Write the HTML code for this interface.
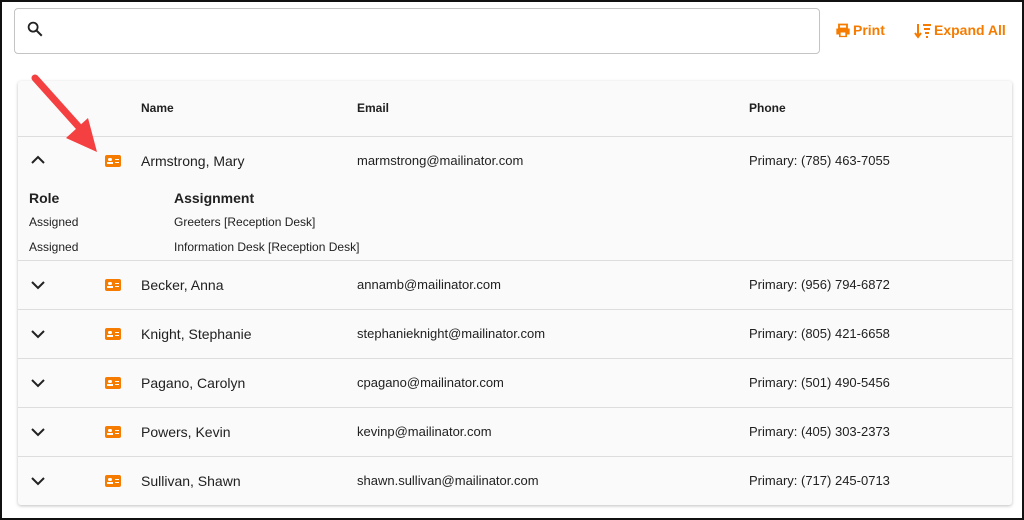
<!DOCTYPE html><html><head><style>
*{box-sizing:border-box;margin:0;padding:0}
body{width:1024px;height:520px;background:#fff;font-family:"Liberation Sans",sans-serif;color:#212121;position:relative;overflow:hidden}
.frame{position:absolute;left:0;top:0;width:1024px;height:520px;border:2px solid #111;z-index:9;pointer-events:none}
.abs{position:absolute}
.search{left:14px;top:8px;width:806px;height:46px;border:1px solid #c4c4c4;border-radius:4px}
.btn{color:#f57c00;font-size:14px;font-weight:bold;top:22px}
.card{left:18px;top:81px;width:994px;height:424px;background:#fafafa;box-shadow:0 1px 3px rgba(0,0,0,.25);border-radius:3px}
.line{left:18px;width:994px;height:1px;background:#ddd}
.t{font-size:14px;color:#212121}
.h{font-size:12px;font-weight:bold}
.s{font-size:12px}
.ic{width:16px;height:12px;background:#f57c00;border-radius:2px}
.ic:before{content:"";position:absolute;left:3px;top:3px;width:4px;height:3px;border-radius:2px;background:#fff}
.ic:after{content:"";position:absolute;left:2px;top:7px;width:6px;height:2px;background:#fff}
.ic i{position:absolute;left:10px;top:4px;width:4px;height:1px;background:#fff;box-shadow:0 3px 0 #fff}
</style></head><body>
<div class="frame"></div>
<div class="abs search"></div>
<svg class="abs" style="left:26px;top:20px" width="18" height="18" viewBox="0 0 24 24"><circle cx="9.5" cy="9.5" r="6" fill="none" stroke="#222" stroke-width="2.4"/><path d="M14 14l7 7" stroke="#222" stroke-width="2.6"/></svg>
<svg class="abs" style="left:835px;top:23px" width="16" height="15" viewBox="0 0 24 22"><path d="M6 2h12v6H6z" fill="none" stroke="#f57c00" stroke-width="2.8"/><path d="M2 8h20v9h-4v4H6v-4H2z" fill="#f57c00"/><rect x="8.5" y="14" width="7" height="5" fill="#fff"/></svg>
<div class="abs btn" style="left:853px">Print</div>
<svg class="abs" style="left:914px;top:23px" width="18" height="16" viewBox="0 0 18 16"><path d="M4 1v12M1 10l3 4 3-4" fill="none" stroke="#f57c00" stroke-width="2"/><path d="M9 2h8M10 6h6M11 10h4M12 14h2" stroke="#f57c00" stroke-width="2"/></svg>
<div class="abs btn" style="left:934px">Expand All</div>
<div class="abs card"></div>
<div class="abs h" style="left:141px;top:101px">Name</div>
<div class="abs h" style="left:357px;top:101px">Email</div>
<div class="abs h" style="left:749px;top:101px">Phone</div>
<div class="abs line" style="top:136px"></div>
<svg class="abs" style="left:30px;top:154px" width="16" height="12" viewBox="0 0 16 12"><path d="M2 9l6-6 6 6" fill="none" stroke="#222" stroke-width="2"/></svg>
<div class="abs ic" style="left:105px;top:155px"><i></i></div>
<div class="abs t" style="left:141px;top:153px">Armstrong, Mary</div>
<div class="abs s" style="left:357px;top:153px;font-size:13px">marmstrong@mailinator.com</div>
<div class="abs s" style="left:749px;top:153px;font-size:13px">Primary: (785) 463-7055</div>
<div class="abs" style="left:29px;top:190px;font-size:14px;font-weight:bold">Role</div>
<div class="abs" style="left:174px;top:190px;font-size:14px;font-weight:bold">Assignment</div>
<div class="abs s" style="left:29px;top:215px">Assigned</div>
<div class="abs s" style="left:174px;top:215px">Greeters [Reception Desk]</div>
<div class="abs s" style="left:29px;top:240px">Assigned</div>
<div class="abs s" style="left:174px;top:240px">Information Desk [Reception Desk]</div>
<svg class="abs" style="left:0;top:0" width="120" height="170" viewBox="0 0 120 170"><path d="M35 78L78 126" stroke="#f44040" stroke-width="7" stroke-linecap="round"/><path d="M66 138L97 152 88 118z" fill="#f44040"/></svg>
<div id="rows"></div>
<script>
var d=[["Becker, Anna","annamb@mailinator.com","(956) 794-6872"],["Knight, Stephanie","stephanieknight@mailinator.com","(805) 421-6658"],["Pagano, Carolyn","cpagano@mailinator.com","(501) 490-5456"],["Powers, Kevin","kevinp@mailinator.com","(405) 303-2373"],["Sullivan, Shawn","shawn.sullivan@mailinator.com","(717) 245-0713"]];
var h="";d.forEach(function(r,i){var y=260+i*49;
h+='<div class="abs line" style="top:'+y+'px"></div>'+
'<svg class="abs" style="left:30px;top:'+(y+19)+'px" width="16" height="12" viewBox="0 0 16 12"><path d="M2 3l6 6 6-6" fill="none" stroke="#222" stroke-width="2"/></svg>'+
'<div class="abs ic" style="left:105px;top:'+(y+19)+'px"><i></i></div>'+
'<div class="abs t" style="left:141px;top:'+(y+17)+'px">'+r[0]+'</div>'+
'<div class="abs" style="left:357px;top:'+(y+17)+'px;font-size:13px">'+r[1]+'</div>'+
'<div class="abs" style="left:749px;top:'+(y+17)+'px;font-size:13px">Primary: '+r[2]+'</div>';});
document.getElementById("rows").innerHTML=h;
</script>
</body></html>
